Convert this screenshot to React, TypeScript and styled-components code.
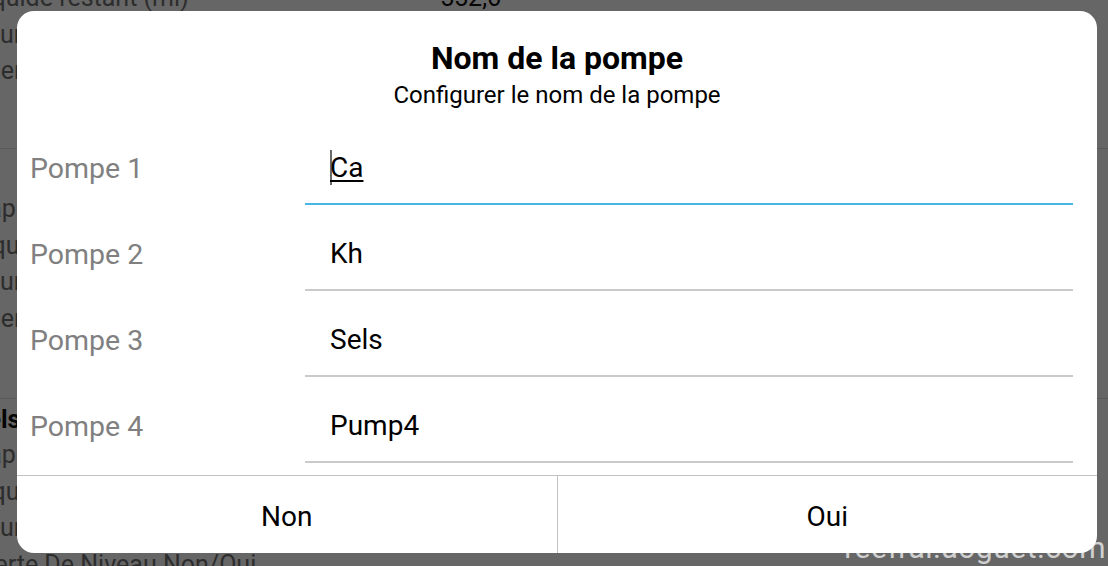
import React from "react";
import styled, { createGlobalStyle } from "styled-components";

const Global = createGlobalStyle`
  html, body { margin: 0; padding: 0; width: 1108px; height: 566px; overflow: hidden; background: #fff; }
  body { font-family: Roboto, "Noto Sans", "Liberation Sans", sans-serif; }
  * { box-sizing: border-box; }
`;

const Screen = styled.div`
  position: relative;
  width: 1108px;
  height: 566px;
  overflow: hidden;
  background: #ffffff;
`;

/* ---------- background page (dimmed) ---------- */
const Page = styled.div`
  display: flex;
  flex-direction: column;
  margin-top: -20px;
  margin-left: -28px;
  width: 1200px;
`;

const Section = styled.div<{ $top: number; $bottom: number }>`
  display: flex;
  flex-direction: column;
  padding-top: ${(p) => p.$top}px;
  padding-bottom: ${(p) => p.$bottom}px;
  border-bottom: 1px solid #e2e2e2;
`;

const SectionTitle = styled.div<{ $h: number }>`
  height: ${(p) => p.$h}px;
  line-height: ${(p) => p.$h}px;
  font-size: 25px;
  font-weight: 700;
  color: #111;
`;

const Item = styled.div`
  display: grid;
  grid-template-columns: 468px 1fr;
  height: 36.5px;
  line-height: 36.5px;
  font-size: 25px;
  white-space: nowrap;
`;

const ItemLabel = styled.span`
  color: #707070;
`;

const ItemValue = styled.span`
  color: #111;
`;

const Scrim = styled.div`
  position: absolute;
  inset: 0;
  background: rgba(0, 0, 0, 0.6);
`;

const Watermark = styled.div`
  position: absolute;
  right: 2px;
  bottom: 0;
  font-size: 30px;
  line-height: 36px;
  color: #d0d0d0;
  letter-spacing: 0.5px;
`;

/* ---------- dialog ---------- */
const DialogLayer = styled.div`
  position: absolute;
  inset: 0;
  display: flex;
  align-items: flex-start;
  padding: 11px 0 0 17px;
`;

const Dialog = styled.div`
  width: 1080px;
  height: 542px;
  background: #ffffff;
  border-radius: 17px;
  display: flex;
  flex-direction: column;
  overflow: hidden;
`;

const Header = styled.div`
  height: 108px;
  display: flex;
  flex-direction: column;
  align-items: center;
  padding-top: 29px;
  gap: 4px;
`;

const Title = styled.div`
  font-size: 32px;
  line-height: 36px;
  font-weight: 700;
  color: #000;
`;

const Subtitle = styled.div`
  font-size: 24px;
  line-height: 30px;
  color: #000;
`;

const Fields = styled.div`
  display: flex;
  flex-direction: column;
  padding: 0 24px 0 13px;
`;

const Row = styled.div`
  display: grid;
  grid-template-columns: 275px 1fr;
  height: 86px;
`;

const Label = styled.div`
  padding-top: 32px;
  font-size: 28.5px;
  line-height: 36px;
  color: #808080;
`;

const Field = styled.div<{ $focused?: boolean }>`
  padding: 31px 0 0 25px;
  font-size: 28px;
  line-height: 36px;
  color: #000;
  border-bottom: 2px solid ${(p) => (p.$focused ? "#47b5e6" : "#cacaca")};
`;

const Composing = styled.span`
  text-decoration: underline;
  text-decoration-thickness: 2px;
  text-underline-offset: 3px;
`;

const Caret = styled.span`
  display: inline-block;
  width: 1.5px;
  height: 35px;
  margin-right: -1.5px;
  vertical-align: -8px;
  background: #6a6a6a;
`;

const Footer = styled.div`
  margin-top: 12px;
  flex: 1;
  display: flex;
  border-top: 1px solid #c2c2c2;
`;

const Button = styled.button<{ $divider?: boolean }>`
  flex: 1;
  border: none;
  background: transparent;
  font-family: inherit;
  font-size: 28px;
  color: #000;
  padding: 3px 0 0;
  border-right: ${(p) => (p.$divider ? "1px solid #c2c2c2" : "none")};
`;

const pumps = [
  { label: "Pompe 1", value: "Ca", focused: true },
  { label: "Pompe 2", value: "Kh" },
  { label: "Pompe 3", value: "Sels" },
  { label: "Pompe 4", value: "Pump4" },
];

export default function App() {
  return (
    <Screen>
      <Global />
      <Page>
        <Section $top={0} $bottom={58.5}>
          <Item>
            <ItemLabel>Liquide restant (ml)</ItemLabel>
            <ItemValue>552,6</ItemValue>
          </Item>
          <Item>
            <ItemLabel>Jours de dosage</ItemLabel>
            <ItemValue>7</ItemValue>
          </Item>
          <Item>
            <ItemLabel>Intervalle</ItemLabel>
            <ItemValue>24 h</ItemValue>
          </Item>
        </Section>
        <Section $top={5} $bottom={61}>
          <SectionTitle $h={37}>K</SectionTitle>
          <Item>
            <ItemLabel>Capacité (ml)</ItemLabel>
            <ItemValue>1000</ItemValue>
          </Item>
          <Item>
            <ItemLabel>Liquide restant (ml)</ItemLabel>
            <ItemValue>720,4</ItemValue>
          </Item>
          <Item>
            <ItemLabel>Jours de dosage</ItemLabel>
            <ItemValue>7</ItemValue>
          </Item>
          <Item>
            <ItemLabel>Intervalle</ItemLabel>
            <ItemValue>24 h</ItemValue>
          </Item>
        </Section>
        <Section $top={4} $bottom={0}>
          <SectionTitle $h={34}>Sels</SectionTitle>
          <Item>
            <ItemLabel>Capacité (ml)</ItemLabel>
            <ItemValue>1000</ItemValue>
          </Item>
          <Item>
            <ItemLabel>Liquide restant (ml)</ItemLabel>
            <ItemValue>884,0</ItemValue>
          </Item>
          <Item>
            <ItemLabel>Jours de dosage</ItemLabel>
            <ItemValue>7</ItemValue>
          </Item>
          <Item>
            <ItemLabel>Alerte De Niveau Non/Oui</ItemLabel>
            <ItemValue />
          </Item>
        </Section>
      </Page>
      <Scrim />
      <Watermark>reefrai.aoguet.com</Watermark>
      <DialogLayer>
        <Dialog>
          <Header>
            <Title>Nom de la pompe</Title>
            <Subtitle>Configurer le nom de la pompe</Subtitle>
          </Header>
          <Fields>
            {pumps.map((p) => (
              <Row key={p.label}>
                <Label>{p.label}</Label>
                <Field $focused={p.focused}>
                  {p.focused ? (
                    <>
                      <Caret />
                      <Composing>{p.value}</Composing>
                    </>
                  ) : (
                    p.value
                  )}
                </Field>
              </Row>
            ))}
          </Fields>
          <Footer>
            <Button $divider>Non</Button>
            <Button>Oui</Button>
          </Footer>
        </Dialog>
      </DialogLayer>
    </Screen>
  );
}
